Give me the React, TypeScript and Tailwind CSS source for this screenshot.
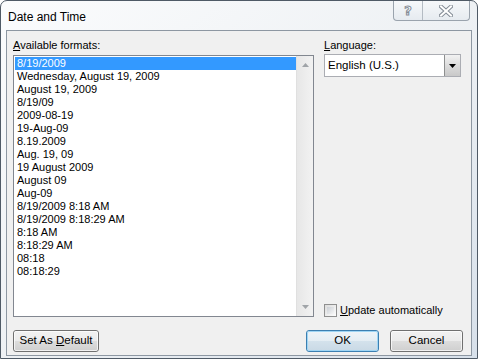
const formats = [
  "8/19/2009",
  "Wednesday, August 19, 2009",
  "August 19, 2009",
  "8/19/09",
  "2009-08-19",
  "19-Aug-09",
  "8.19.2009",
  "Aug. 19, 09",
  "19 August 2009",
  "August 09",
  "Aug-09",
  "8/19/2009 8:18 AM",
  "8/19/2009 8:18:29 AM",
  "8:18 AM",
  "8:18:29 AM",
  "08:18",
  "08:18:29",
];

const ui = "font-['Segoe_UI','Liberation_Sans',Arial,sans-serif]";

function CaptionButtons() {
  return (
    <div className="flex mr-[7px] h-[20px] border border-t-0 border-[#9aa3ad] rounded-b-[4px] bg-gradient-to-b from-[#f6f8fa] to-[#e6ebf0] overflow-hidden">
      <div className="w-[29px] flex items-center justify-center border-r border-[#b4bbc3]">
        <span className="font-['DejaVu_Sans',sans-serif] font-bold text-[13px] leading-none text-white [-webkit-text-stroke:1px_#848c96]">
          ?
        </span>
      </div>
      <div className="w-[46px] flex items-center justify-center">
        <svg width="14" height="12" viewBox="0 0 14 12">
          <path d="M2 1.5 L12 10.5 M12 1.5 L2 10.5" stroke="#848c96" strokeWidth="4" strokeLinecap="square" />
          <path d="M2 1.5 L12 10.5 M12 1.5 L2 10.5" stroke="#ffffff" strokeWidth="2" strokeLinecap="square" />
        </svg>
      </div>
    </div>
  );
}

function Button({ children, wide, primary }: { children: React.ReactNode; wide?: boolean; primary?: boolean }) {
  return (
    <div
      className={
        "h-[22px] rounded-[3px] border flex items-center justify-center text-[11.5px] text-black " +
        ui +
        (wide ? " w-[86px]" : " w-[73px]") +
        (primary
          ? " border-[#3c7fb1] bg-[linear-gradient(#eef4f8_0%,#e4edf3_50%,#d4e2ec_50%,#c9d9e5_100%)]"
          : " border-[#707070] bg-[linear-gradient(#f2f2f2_0%,#ebebeb_50%,#dddddd_50%,#cfcfcf_100%)]")
      }
    >
      <div
        className={
          "w-full h-full rounded-[2px] border flex items-center justify-center pb-[1px] " +
          (primary ? "border-[#9fd5f4]" : "border-white/70")
        }
      >
        <span>{children}</span>
      </div>
    </div>
  );
}

function ScrollArrow({ down }: { down?: boolean }) {
  return (
    <svg width="7" height="4" viewBox="0 0 7 4">
      <path d={down ? "M0 0 L7 0 L3.5 4 Z" : "M0 4 L7 4 L3.5 0 Z"} fill="#a0a4a8" />
    </svg>
  );
}

export default function App() {
  return (
    <div className="w-[481px] h-[359px] bg-white overflow-hidden">
      <div className="w-[478px] h-[359px] border border-[#4f5a66] rounded-t-[7px] bg-gradient-to-br from-[#fbfcfd] via-[#eef1f4] to-[#d7e0ea] flex flex-col">
        {/* Title bar */}
        <div className="h-[29px] flex justify-between items-start shrink-0">
          <div className={"pl-[7px] pt-[8px] text-[12px] leading-[16px] text-black " + ui}>Date and Time</div>
          <CaptionButtons />
        </div>

        {/* Client area */}
        <div className={"mx-[5px] mb-[2px] flex-1 border border-[#8d97a2] bg-[#f0f0f0] pt-[7px] pl-[6px] pr-[8px] flex flex-col " + ui}>
          <div className="flex gap-[10px]">
            <div className="flex flex-col">
              <div className="h-[15px] text-[11px] leading-[15px] text-black mb-[2px]">
                <u className="underline-offset-1">A</u>vailable formats:
              </div>
              <div className="w-[301px] h-[262px] border border-[#828790] bg-white flex">
                <div className="flex-1 pt-[1px] pl-[1px] font-['Liberation_Sans',Arial,sans-serif] text-[11px]">
                  {formats.map((f, i) => (
                    <div
                      key={f}
                      className={
                        "h-[13px] leading-[13px] pl-[2px] whitespace-nowrap " +
                        (i === 0 ? "bg-[#3399ff] text-white" : "text-black")
                      }
                    >
                      {f}
                    </div>
                  ))}
                </div>
                <div className="w-[17px] bg-gradient-to-r from-[#e7e7e7] to-[#f2f2f2] border-l border-[#e0e0e0] flex flex-col justify-between items-center py-[7px]">
                  <ScrollArrow />
                  <ScrollArrow down />
                </div>
              </div>
            </div>

            <div className="flex flex-col justify-between flex-1">
              <div>
                <div className="h-[15px] text-[11px] leading-[15px] text-black mb-[1px]">
                  <u className="underline-offset-1">L</u>anguage:
                </div>
                <div className="h-[23px] w-[137px] border border-[#abadb3] bg-white flex items-stretch">
                  <div className="flex-1 pl-[3px] text-[11.5px] leading-[21px] text-black">English (U.S.)</div>
                  <div className="w-[16px] border-l border-[#8e8f8f] bg-gradient-to-b from-[#f2f2f2] via-[#dcdcdc] to-[#c9c9c9] flex items-center justify-center">
                    <svg width="7" height="4" viewBox="0 0 7 4">
                      <path d="M0 0 L7 0 L3.5 4 Z" fill="#000" />
                    </svg>
                  </div>
                </div>
              </div>
              <div className="flex items-center gap-[3px] mb-[-1px]">
                <div className="w-[13px] h-[13px] border border-[#8f8f8f] bg-gradient-to-br from-[#dcdcdc] to-[#fdfdfd] p-[2px]">
                  <div className="w-full h-full bg-gradient-to-br from-[#cbcfd5] to-[#f6f6f6]" />
                </div>
                <div className="text-[11px] leading-[15px] text-black">
                  <u className="underline-offset-1">U</u>pdate automatically
                </div>
              </div>
            </div>
          </div>

          <div className="mt-[13px] flex items-center">
            <Button wide>
              Set As <u className="underline-offset-1">D</u>efault
            </Button>
            <div className="flex-1" />
            <div className="flex gap-[11px]">
              <Button primary>OK</Button>
              <Button>Cancel</Button>
            </div>
          </div>
        </div>
      </div>
    </div>
  );
}
